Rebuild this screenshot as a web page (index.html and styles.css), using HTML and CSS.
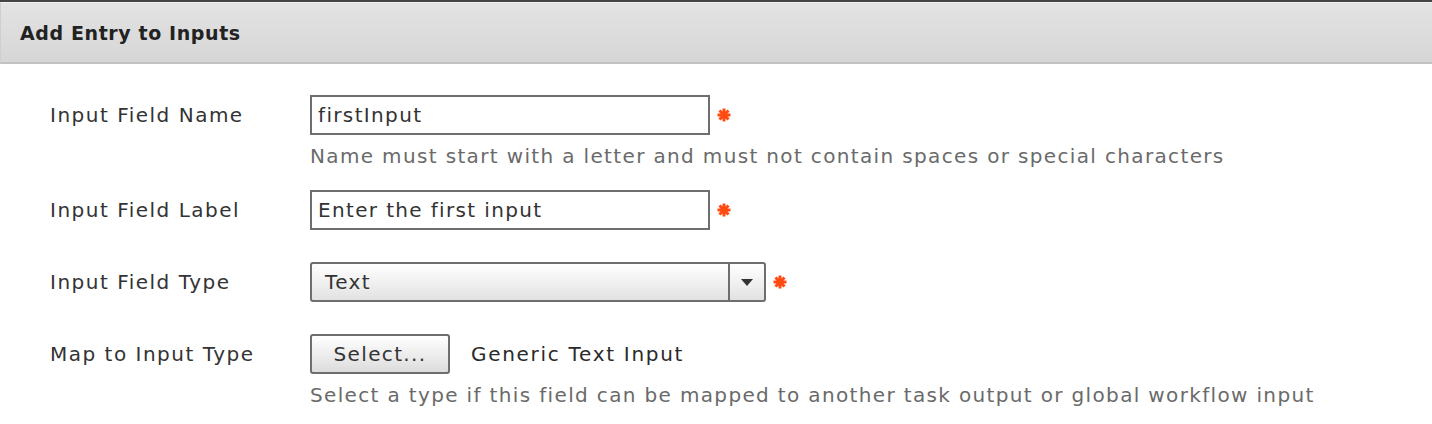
FILE: index.html
```html
<!DOCTYPE html>
<html>
<head>
<meta charset="utf-8">
<link rel="stylesheet" href="styles.css">
</head>
<body>
<div class="panel">
  <div class="panel-header">Add Entry to Inputs</div>
  <div class="panel-body">
    <div class="row row-help">
      <div class="label">Input Field Name</div>
      <div class="field">
        <div class="control-line">
          <div class="textbox">firstInput</div>
          <svg class="req" viewBox="0 0 14 14" width="14" height="14"><g stroke="#ff4a12" stroke-width="3"><line x1="7" y1="0.5" x2="7" y2="13.5"/><line x1="0.5" y1="7" x2="13.5" y2="7"/><line x1="2.5" y1="2.5" x2="11.5" y2="11.5"/><line x1="11.5" y1="2.5" x2="2.5" y2="11.5"/></g><circle cx="7" cy="7" r="3.5" fill="#ff4a12"/></svg>
        </div>
        <div class="help">Name must start with a letter and must not contain spaces or special characters</div>
      </div>
    </div>
    <div class="row">
      <div class="label">Input Field Label</div>
      <div class="field">
        <div class="control-line">
          <div class="textbox">Enter the first input</div>
          <svg class="req" viewBox="0 0 14 14" width="14" height="14"><g stroke="#ff4a12" stroke-width="3"><line x1="7" y1="0.5" x2="7" y2="13.5"/><line x1="0.5" y1="7" x2="13.5" y2="7"/><line x1="2.5" y1="2.5" x2="11.5" y2="11.5"/><line x1="11.5" y1="2.5" x2="2.5" y2="11.5"/></g><circle cx="7" cy="7" r="3.5" fill="#ff4a12"/></svg>
        </div>
      </div>
    </div>
    <div class="row">
      <div class="label">Input Field Type</div>
      <div class="field">
        <div class="control-line">
          <div class="select">
            <span class="select-value">Text</span>
            <span class="select-arrow"><svg viewBox="0 0 12 7" width="12" height="7"><path d="M0 0 H12 L6 7 Z" fill="#333"/></svg></span>
          </div>
          <svg class="req" viewBox="0 0 14 14" width="14" height="14"><g stroke="#ff4a12" stroke-width="3"><line x1="7" y1="0.5" x2="7" y2="13.5"/><line x1="0.5" y1="7" x2="13.5" y2="7"/><line x1="2.5" y1="2.5" x2="11.5" y2="11.5"/><line x1="11.5" y1="2.5" x2="2.5" y2="11.5"/></g><circle cx="7" cy="7" r="3.5" fill="#ff4a12"/></svg>
        </div>
      </div>
    </div>
    <div class="row">
      <div class="label">Map to Input Type</div>
      <div class="field">
        <div class="control-line">
          <div class="button">Select...</div>
          <span class="value">Generic Text Input</span>
        </div>
        <div class="help help-last">Select a type if this field can be mapped to another task output or global workflow input</div>
      </div>
    </div>
  </div>
</div>
</body>
</html>
```

FILE: styles.css
```css
html, body {
  margin: 0;
  padding: 0;
  background: #ffffff;
}
body {
  font-family: "DejaVu Sans", Verdana, sans-serif;
  font-size: 20px;
  letter-spacing: 1.35px;
  color: #333;
}
.panel {
  border-top: 2px solid #444;
}
.panel-header {
  height: 62px;
  box-sizing: border-box;
  border-top: 1px solid #f2f2f2;
  border-left: 1px solid #cfcfcf;
  border-bottom: 2px solid #c2c2c2;
  background: linear-gradient(#e3e3e3, #d6d6d6);
  padding-left: 19px;
  display: flex;
  align-items: center;
  font-weight: bold;
  font-size: 19px;
  letter-spacing: 0.6px;
  color: #222;
}
.panel-body {
  padding: 31px 0 0 50px;
}
.row {
  display: flex;
  margin-bottom: 32px;
}
.row-help {
  margin-bottom: 23px;
}
.label {
  width: 260px;
  flex: none;
  height: 40px;
  line-height: 40px;
  letter-spacing: 1.5px;
  color: #333;
}
.field {
  display: flex;
  flex-direction: column;
}
.control-line {
  display: flex;
  align-items: center;
  height: 40px;
}
.textbox {
  width: 400px;
  height: 40px;
  box-sizing: border-box;
  border: 2px solid #6e6e6e;
  padding-left: 6px;
  line-height: 36px;
  color: #333;
}
.req {
  margin-left: 7px;
}
.help {
  margin-top: 10px;
  line-height: 22px;
  color: #6a6a6a;
}
.help-last {
  margin-top: 10px;
}
.select {
  width: 456px;
  height: 40px;
  box-sizing: border-box;
  border: 2px solid #6e6e6e;
  border-radius: 3px;
  background: linear-gradient(#ffffff, #e2e2e2);
  display: flex;
}
.select-value {
  flex: 1;
  padding-left: 13px;
  line-height: 36px;
  color: #333;
  border-right: 2px solid #6e6e6e;
}
.select-arrow {
  width: 34px;
  display: flex;
  align-items: center;
  justify-content: center;
}
.button {
  width: 140px;
  height: 40px;
  box-sizing: border-box;
  border: 2px solid #6e6e6e;
  border-radius: 3px;
  background: linear-gradient(#ffffff, #dcdcdc);
  text-align: center;
  line-height: 36px;
  color: #333;
}
.value {
  margin-left: 21px;
  letter-spacing: 1.7px;
  color: #2a2a2a;
}
```
